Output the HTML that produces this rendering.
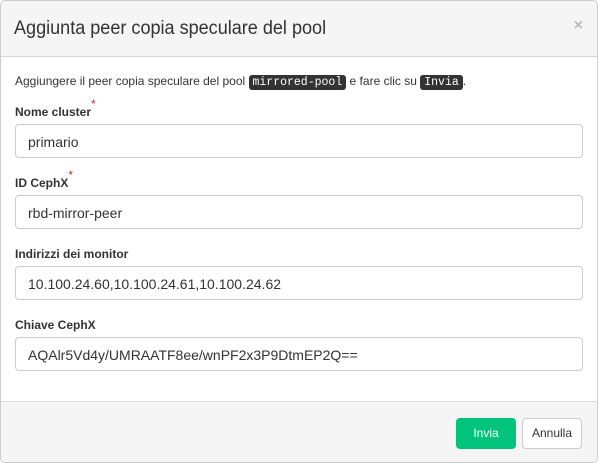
<!DOCTYPE html>
<html><head><meta charset="utf-8"><style>
*{box-sizing:border-box;margin:0;padding:0}
body{width:598px;height:463px;background:#fff;font-family:"Liberation Sans",sans-serif;color:#333;overflow:hidden}
.m{position:absolute;left:0;top:0;width:598px;height:463px;border:1px solid #ccc;border-radius:5px;overflow:hidden;background:#fff}
.h{height:56px;background:#f5f5f5;border-bottom:1px solid #d5d5d5;position:relative}
.h h1{font-weight:normal;font-size:19px;position:absolute;left:13px;top:17px;color:#333;transform:scaleX(0.95);transform-origin:left top;white-space:nowrap}
.x{position:absolute;right:14px;top:16px;color:#bbb;font-size:16px;font-weight:bold}
.p{position:absolute;left:14px;top:73px;font-size:12px;}
code{font-family:"Liberation Mono",monospace;background:#333;color:#fff;border-radius:3px;padding:1px 4px;font-size:11.5px}
.l{position:absolute;left:14px;font-size:12px;font-weight:bold;line-height:14px}
.l sup{color:#c9302c;font-weight:normal;font-size:12px;line-height:0;position:relative;top:-1px;vertical-align:top}
.i{position:absolute;left:14px;width:568px;height:34px;border:1px solid #ccc;border-radius:4px;font-size:14px;padding:9px 12px;color:#333}
.f{position:absolute;left:0;top:400px;width:598px;height:62px;background:#f5f5f5;border-top:1px solid #ddd}
.b{position:absolute;top:16px;height:31px;border-radius:4px;font-size:12px;text-align:center;line-height:31px}
</style></head><body><div class="m">
<div class="h"><h1>Aggiunta peer copia speculare del pool</h1><span class="x">×</span></div>
<div class="p">Aggiungere il peer copia speculare del pool <code>mirrored-pool</code> e fare clic su <code>Invia</code>.</div>
<div class="l" style="top:104px">Nome cluster<sup>*</sup></div>
<div class="i" style="top:123px">primario</div>
<div class="l" style="top:175px">ID CephX<sup>*</sup></div>
<div class="i" style="top:194px">rbd-mirror-peer</div>
<div class="l" style="top:246px">Indirizzi dei monitor</div>
<div class="i" style="top:265px">10.100.24.60,10.100.24.61,10.100.24.62</div>
<div class="l" style="top:317px">Chiave CephX</div>
<div class="i" style="top:336px">AQAlr5Vd4y/UMRAATF8ee/wnPF2x3P9DtmEP2Q==</div>
<div class="f">
<div class="b" style="left:455px;width:60px;background:#00c37c;color:#fff">Invia</div>
<div class="b" style="left:521px;width:60px;background:#fff;border:1px solid #ccc;color:#333;line-height:29px">Annulla</div>
</div>
</div></body></html>
